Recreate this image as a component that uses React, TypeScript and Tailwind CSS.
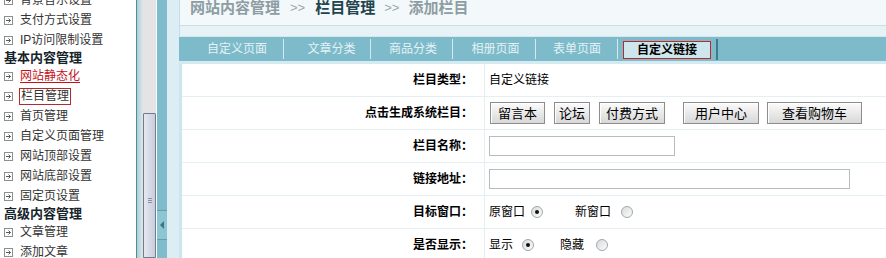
import type { ReactNode } from 'react'

const FONT = "font-['Liberation_Sans','Noto_Sans_CJK_SC',sans-serif]"

type NavItem = { label: string; header?: boolean; kind?: 'red' | 'boxed' }

const NAV: NavItem[] = [
  { label: '背景音乐设置' },
  { label: '支付方式设置' },
  { label: 'IP访问限制设置' },
  { label: '基本内容管理', header: true },
  { label: '网站静态化', kind: 'red' },
  { label: '栏目管理', kind: 'boxed' },
  { label: '首页管理' },
  { label: '自定义页面管理' },
  { label: '网站顶部设置' },
  { label: '网站底部设置' },
  { label: '固定页设置' },
  { label: '高级内容管理', header: true },
  { label: '文章管理' },
  { label: '添加文章' },
]

const TABS = [
  { label: '自定义页面', w: 'w-[104px]', pad: 'pl-[12px]' },
  { label: '文章分类', w: 'w-[86px]', pad: 'pl-[9px]' },
  { label: '商品分类', w: 'w-[81px]', pad: 'pl-[3px]' },
  { label: '相册页面', w: 'w-[82px]', pad: 'pl-[3px]' },
  { label: '表单页面', w: 'w-[81px]', pad: 'pl-[1px]' },
]

const SYS_BUTTONS = [
  { label: '留言本', w: 'w-[55px]', ml: 'ml-[1px]' },
  { label: '论坛', w: 'w-[36px]', ml: 'ml-[9px]' },
  { label: '付费方式', w: 'w-[66px]', ml: 'ml-[9px]' },
  { label: '用户中心', w: 'w-[76px]', ml: 'ml-[18px]' },
  { label: '查看购物车', w: 'w-[95px]', ml: 'ml-[8px]' },
]

function ExpandIcon() {
  return (
    <svg width="9" height="9" viewBox="0 0 9 9" className="shrink-0">
      <rect x="0.5" y="0.5" width="8" height="8" fill="#fff" stroke="#8a8f92" />
      <path d="M2 4.5h4.5M4.5 2.5l2 2-2 2" fill="none" stroke="#555b5e" strokeWidth="1" />
    </svg>
  )
}

function Sidebar() {
  return (
    <div className="w-[136px] shrink-0 bg-white overflow-hidden">
      <div className="-mt-[10px] flex flex-col">
        {NAV.map((item) =>
          item.header ? (
            <div key={item.label} className="h-[16px] flex items-center pl-[4px] text-[13px] font-bold text-[#15232a]">
              {item.label}
            </div>
          ) : (
            <div key={item.label} className="h-[20px] flex items-center pl-[4px] text-[12px] text-[#333]">
              <ExpandIcon />
              {item.kind === 'boxed' ? (
                <span className="ml-[6px] border border-[#b22a2a] px-[1px] leading-[15px]">{item.label}</span>
              ) : item.kind === 'red' ? (
                <span className="ml-[7px] text-[#c4121c] underline underline-offset-2">{item.label}</span>
              ) : (
                <span className="ml-[7px]">{item.label}</span>
              )}
            </div>
          )
        )}
      </div>
    </div>
  )
}

function Divider() {
  return (
    <div className="flex shrink-0">
      <div className="w-px bg-[#4c8e9c]" />
      <div className="w-[6px] bg-linear-to-r from-[#a8d0d9] to-[#e4e6e6]" />
      {/* scrollbar */}
      <div className="w-[13px] bg-[#e4e4e4] flex flex-col">
        <div className="h-[113px]" />
        <div className="flex-1 border border-[#6d7d8b] rounded-t-[1px] bg-linear-to-r from-[#e6e8f0] to-[#c9cddd] flex flex-col items-center pt-[84px]">
          <div className="w-[4px] h-px bg-[#8a93a6]" />
          <div className="w-[4px] h-px bg-[#8a93a6] mt-[1px]" />
          <div className="w-[4px] h-px bg-[#8a93a6] mt-[1px]" />
        </div>
      </div>
      <div className="w-px bg-white" />
      {/* collapse column */}
      <div className="w-[10px] bg-[#7fbccb] flex flex-col">
        <div className="h-[210px]" />
        <div className="h-[30px] border-y border-[#5e9fae] bg-[#8cc6d3] flex items-center justify-center">
          <div className="w-0 h-0 border-y-[4px] border-y-transparent border-r-[4px] border-r-[#3b7584]" />
        </div>
      </div>
    </div>
  )
}

function Radio({ checked }: { checked?: boolean }) {
  return (
    <span className="w-[12px] h-[12px] rounded-full border border-[#a2a7ab] bg-linear-to-br from-[#d9dbdc] to-[#fcfcfc] flex items-center justify-center shrink-0">
      {checked && <span className="w-[4px] h-[4px] rounded-full bg-[#111]" />}
    </span>
  )
}

function Row({ label, children }: { label: string; children: ReactNode }) {
  return (
    <div className="h-[33px] flex border-b border-[#e5eff2]">
      <div className="w-[303px] shrink-0 border-r border-[#e5eff2] flex items-center justify-end pr-[11px] text-[12px] font-bold text-black">
        {label}
      </div>
      <div className="flex-1 flex items-center pl-[4px] text-[12px] text-black">{children}</div>
    </div>
  )
}

function Breadcrumb() {
  return (
    <div className="h-[26px] bg-[#f3f8fa] border-l border-b border-[#c4dfe7] flex items-start pl-[10px] text-[15px] leading-[16px] font-bold">
      <span className="text-[#8d9da3]">网站内容管理</span>
      <span className="mx-[10px] text-[13px] font-normal text-[#9aa8ad]">&gt;&gt;</span>
      <span className="text-[#23434d]">栏目管理</span>
      <span className="mx-[9px] text-[13px] font-normal text-[#9aa8ad]">&gt;&gt;</span>
      <span className="text-[#8d9da3]">添加栏目</span>
    </div>
  )
}

function TabBar() {
  return (
    <div className="h-[24px] bg-[#7dbbca] flex items-stretch text-[12px]">
      {TABS.map((t) => (
        <div key={t.label} className="flex items-stretch">
          <div className={`${t.w} ${t.pad} flex items-center justify-center text-[#e4f2f5]`}>{t.label}</div>
          <div className="w-px self-center h-[20px] bg-[#d3eaf0]" />
        </div>
      ))}
      <div className="w-[98px] px-[5px] pt-[4px] pb-[2px] flex">
        <div className="flex-1 border border-[#c0272b] bg-[#cfe6ec] flex items-center justify-center font-bold text-black">
          自定义链接
        </div>
      </div>
      <div className="w-[2px] self-center h-[21px] bg-[#3d7c8d]" />
    </div>
  )
}

export default function App() {
  return (
    <div className={`w-[886px] h-[258px] overflow-hidden flex ${FONT}`}>
      <Sidebar />
      <Divider />
      <div className="flex-1 bg-[#dcedf3] pl-[12px] flex flex-col min-w-0">
        <div className="flex-1 bg-[#e6f2f6] flex flex-col">
          <Breadcrumb />
          <div className="h-[11px] border-l border-[#c4dfe7] border-b border-b-[#d2e7ee]" />
          <TabBar />
          <div className="h-[3px] bg-[#d4eaf0]" />
          <div className="flex-1 bg-white border-l-[3px] border-[#cde6ed]">
            <Row label="栏目类型：">自定义链接</Row>
            <Row label="点击生成系统栏目：">
              {SYS_BUTTONS.map((b) => (
                <button
                  key={b.label}
                  className={`${b.w} ${b.ml} h-[22px] border border-[#8d8d8d] bg-linear-to-b from-[#fbfbfb] to-[#d8d8d8] shadow-[inset_1px_1px_0_#fff] text-[13px] leading-none text-black flex items-center justify-center`}
                >
                  {b.label}
                </button>
              ))}
            </Row>
            <Row label="栏目名称：">
              <input className="w-[186px] h-[20px] border border-[#b9bcbe] bg-white outline-none" />
            </Row>
            <Row label="链接地址：">
              <input className="w-[361px] h-[20px] border border-[#b9bcbe] bg-white outline-none" />
            </Row>
            <Row label="目标窗口：">
              <span>原窗口</span>
              <span className="ml-[6px]"><Radio checked /></span>
              <span className="ml-[32px]">新窗口</span>
              <span className="ml-[10px]"><Radio /></span>
            </Row>
            <Row label="是否显示：">
              <span>显示</span>
              <span className="ml-[9px]"><Radio checked /></span>
              <span className="ml-[26px]">隐藏</span>
              <span className="ml-[12px]"><Radio /></span>
            </Row>
          </div>
        </div>
      </div>
    </div>
  )
}
